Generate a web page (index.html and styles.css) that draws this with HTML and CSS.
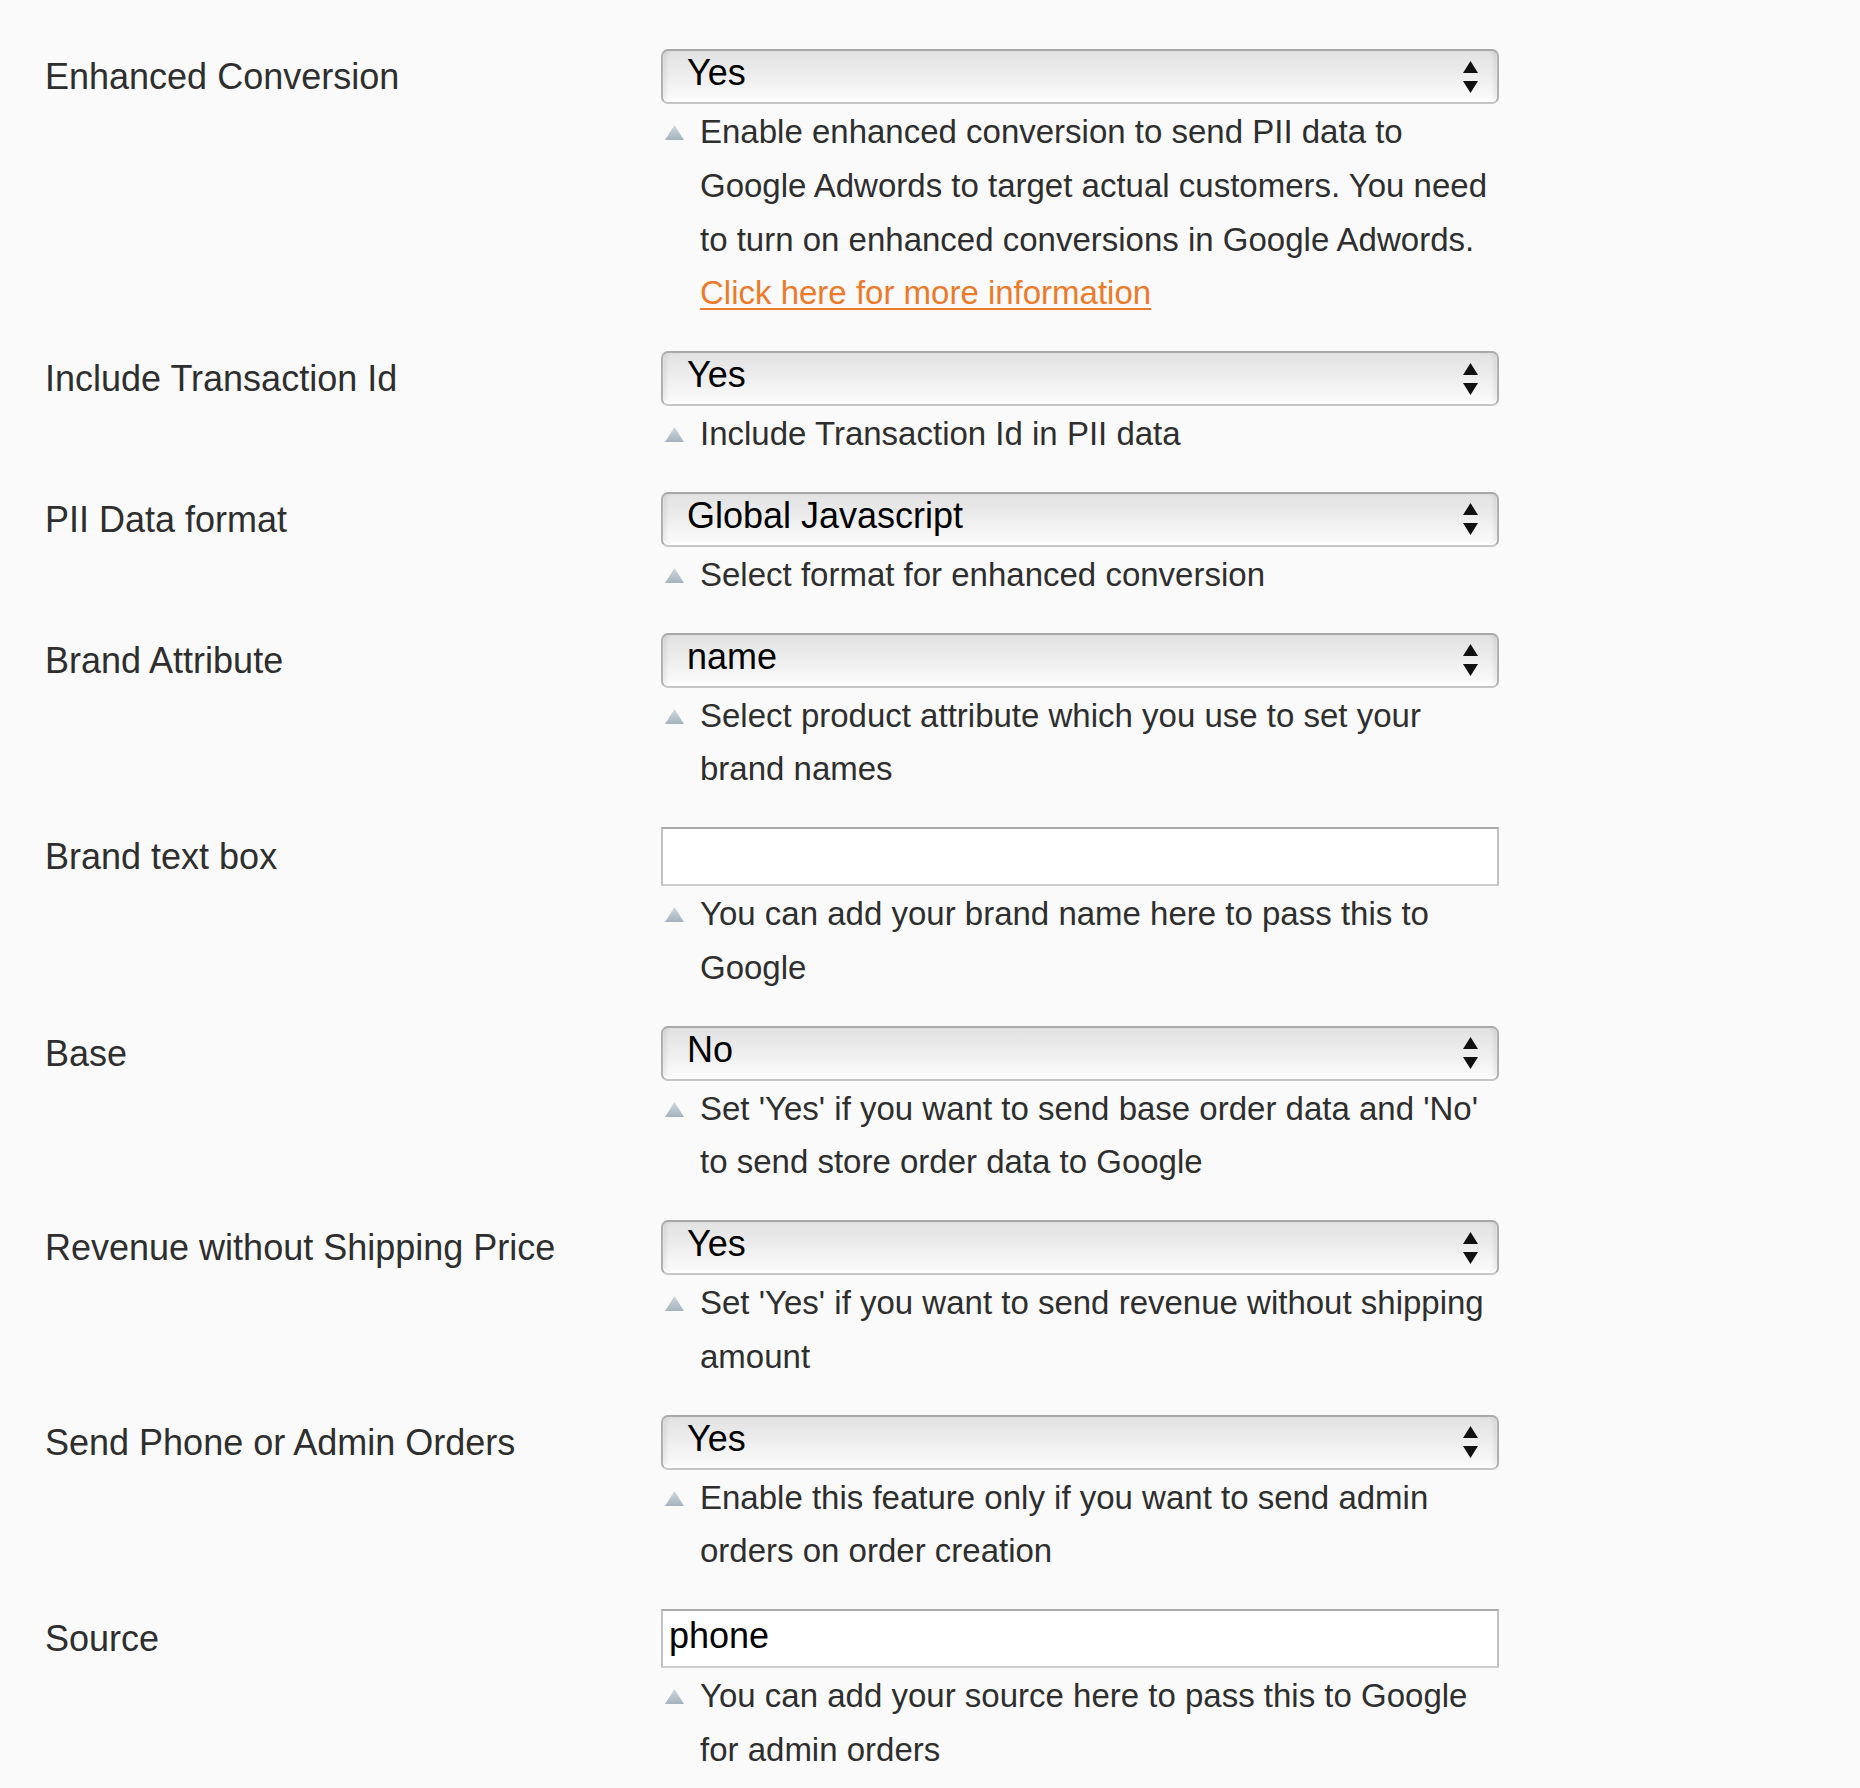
FILE: index.html
```html
<!DOCTYPE html>
<html lang="en">
<head>
<meta charset="utf-8">
<title>Enhanced Conversion settings</title>
<link rel="stylesheet" href="styles.css">
</head>
<body>
<svg class="defs" width="0" height="0" aria-hidden="true">
  <defs>
    <linearGradient id="tri" x1="0" y1="0" x2="0" y2="1">
      <stop offset="0" stop-color="#cfd8de"/>
      <stop offset="1" stop-color="#a3b3bd"/>
    </linearGradient>
    <symbol id="hint" viewBox="0 0 19 15"><polygon points="9.5,0 19,15 0,15" fill="url(#tri)"/></symbol>
    <symbol id="updown" viewBox="0 0 15 32"><polygon points="7.5,0 15,12 0,12" fill="#111"/><polygon points="0,20 15,20 7.5,32" fill="#111"/></symbol>
  </defs>
</svg>
<div class="form">
  <div class="row">
    <div class="label">Enhanced Conversion</div>
    <div class="value">
      <div class="select"><span>Yes</span><svg class="arrows"><use href="#updown"/></svg></div>
      <div class="help"><svg class="hint"><use href="#hint"/></svg><p>Enable enhanced conversion to send PII data to Google Adwords to target actual customers. You need to turn on enhanced conversions in Google Adwords. <a href="#">Click here for more information</a></p></div>
    </div>
  </div>
  <div class="row">
    <div class="label">Include Transaction Id</div>
    <div class="value">
      <div class="select"><span>Yes</span><svg class="arrows"><use href="#updown"/></svg></div>
      <div class="help"><svg class="hint"><use href="#hint"/></svg><p>Include Transaction Id in PII data</p></div>
    </div>
  </div>
  <div class="row">
    <div class="label">PII Data format</div>
    <div class="value">
      <div class="select"><span>Global Javascript</span><svg class="arrows"><use href="#updown"/></svg></div>
      <div class="help"><svg class="hint"><use href="#hint"/></svg><p>Select format for enhanced conversion</p></div>
    </div>
  </div>
  <div class="row">
    <div class="label">Brand Attribute</div>
    <div class="value">
      <div class="select"><span>name</span><svg class="arrows"><use href="#updown"/></svg></div>
      <div class="help"><svg class="hint"><use href="#hint"/></svg><p>Select product attribute which you use to set your brand names</p></div>
    </div>
  </div>
  <div class="row">
    <div class="label label-input">Brand text box</div>
    <div class="value">
      <div class="input"></div>
      <div class="help"><svg class="hint"><use href="#hint"/></svg><p>You can add your brand name here to pass this to Google</p></div>
    </div>
  </div>
  <div class="row">
    <div class="label">Base</div>
    <div class="value">
      <div class="select"><span>No</span><svg class="arrows"><use href="#updown"/></svg></div>
      <div class="help"><svg class="hint"><use href="#hint"/></svg><p>Set 'Yes' if you want to send base order data and 'No' to send store order data to Google</p></div>
    </div>
  </div>
  <div class="row">
    <div class="label">Revenue without Shipping Price</div>
    <div class="value">
      <div class="select"><span>Yes</span><svg class="arrows"><use href="#updown"/></svg></div>
      <div class="help"><svg class="hint"><use href="#hint"/></svg><p>Set 'Yes' if you want to send revenue without shipping amount</p></div>
    </div>
  </div>
  <div class="row">
    <div class="label">Send Phone or Admin Orders</div>
    <div class="value">
      <div class="select"><span>Yes</span><svg class="arrows"><use href="#updown"/></svg></div>
      <div class="help"><svg class="hint"><use href="#hint"/></svg><p>Enable this feature only if you want to send admin orders on order creation</p></div>
    </div>
  </div>
  <div class="row">
    <div class="label label-input">Source</div>
    <div class="value">
      <div class="input"><span>phone</span></div>
      <div class="help"><svg class="hint"><use href="#hint"/></svg><p>You can add your source here to pass this to Google for admin orders</p></div>
    </div>
  </div>
</div>
</body>
</html>
```
FILE: styles.css
```css
html, body {
  margin: 0;
  padding: 0;
  background: #fafafa;
}
body {
  font-family: "Liberation Sans", Arial, Helvetica, sans-serif;
  color: #303030;
  height: 1788px;
  overflow: hidden;
}
.defs {
  position: absolute;
  width: 0;
  height: 0;
}
.form {
  padding: 49px 0 0 45px;
}
.row {
  display: grid;
  grid-template-columns: 616px 838px;
  margin-bottom: 31px;
}
.label {
  font-size: 36px;
  line-height: 55px;
  color: #2e2e2e;
}
.label-input {
  line-height: 59px;
}
.select {
  box-sizing: border-box;
  height: 55px;
  border: 2px solid #b0b0b0;
  border-top-color: #a9a9a9;
  border-bottom-color: #c6c6c6;
  border-radius: 7px;
  background: linear-gradient(to bottom, #e2e2e2 0%, #eaeaea 35%, #f5f5f5 75%, #fcfcfc 100%);
  box-shadow: inset 0 -2px 2px #ffffff, inset 5px 0 5px -3px rgba(0,0,0,0.10), inset -5px 0 5px -3px rgba(0,0,0,0.10);
  display: flex;
  align-items: center;
  justify-content: space-between;
  padding: 0 19px 7px 24px;
  font-size: 36px;
  color: #000;
}
.arrows {
  width: 15px;
  height: 32px;
  margin-top: 7px;
}
.input {
  box-sizing: border-box;
  height: 59px;
  border: 2px solid #c2c2c2;
  border-top-color: #a9a9a9;
  border-bottom-color: #cdcdcd;
  background: #fff;
  display: flex;
  align-items: center;
  padding: 0 0 5px 6px;
  font-size: 36px;
  color: #000;
}
.help {
  display: flex;
  align-items: flex-start;
  margin-top: 1px;
}
.hint {
  flex: none;
  width: 19px;
  height: 15px;
  margin: 20px 16px 0 4px;
}
.help p {
  margin: 0;
  font-size: 33px;
  line-height: 53.75px;
  color: #2e2e2e;
  width: 799px;
}
.help a {
  color: #eb7a2a;
  text-decoration: underline;
  text-decoration-thickness: 2px;
  text-underline-offset: 4px;
}
```
